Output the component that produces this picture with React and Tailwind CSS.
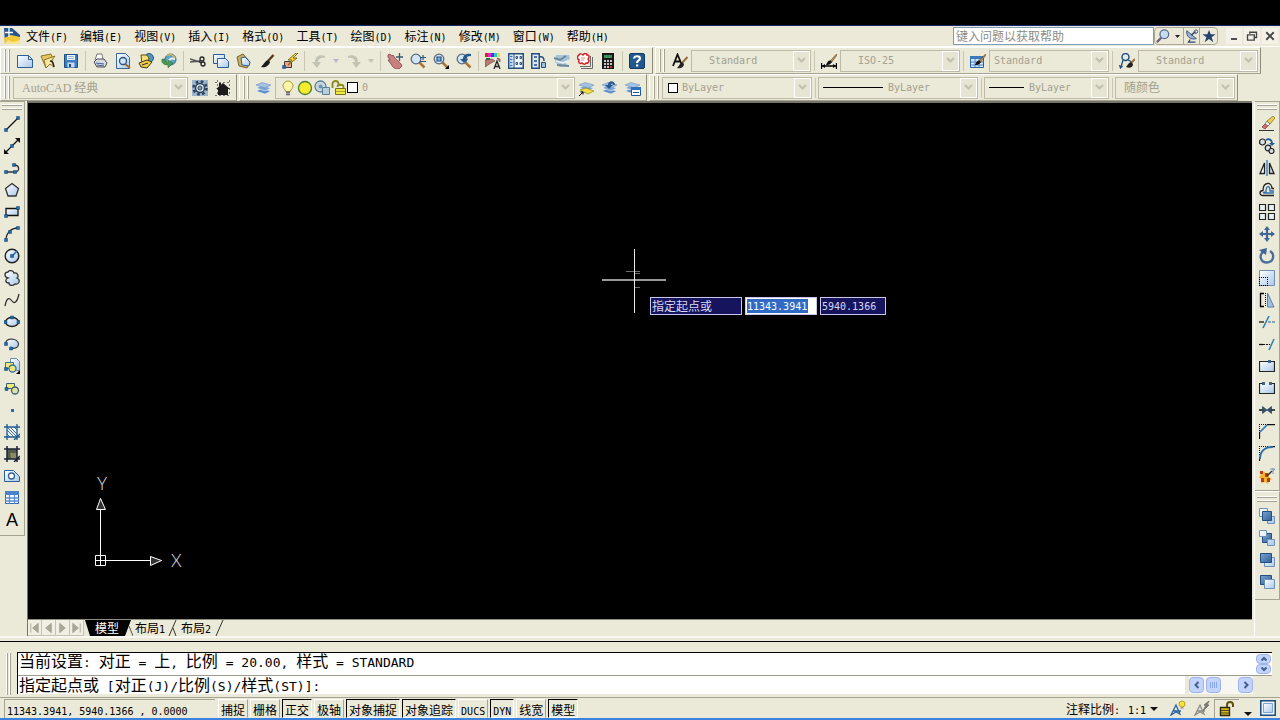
const MONO = "font-['DejaVu_Sans_Mono','Liberation_Mono',monospace]";
const HAN = "font-['Noto_Sans_CJK_SC',sans-serif]";

// Splits mixed text so that Latin runs take a half-width face.
const Mixed = ({ text, large }) => (
  <span className={`whitespace-pre ${HAN} ${large ? "text-[16px]" : "text-[12px]"}`}>
    {text.split(/([\x20-\x7e]+)/).map((part, i) =>
      i % 2 ? (
        <span key={i} className={`${MONO} ${large ? "text-[13px]" : "text-[10px]"}`}>{part}</span>
      ) : (
        part
      )
    )}
  </span>
);

const Svg = ({ children, size = 16 }) => (
  <svg width={size} height={size} viewBox="0 0 16 16" fill="none" className="shrink-0" aria-hidden="true">
    {children}
  </svg>
);

const Dot = ({ x, y }) => <path d={`M${x - 1.5} ${y - 1.5}h3v3h-3z`} fill="#1f6fae" stroke="#0c3c6c" strokeWidth="0.5" />;

const Defs = () => (
  <svg width="0" height="0" className="absolute" aria-hidden="true">
    <defs>
      <linearGradient id="sheet" x1="0" y1="0" x2="1" y2="1">
        <stop offset="0" stopColor="#ffffff" />
        <stop offset="1" stopColor="#a9c8ea" />
      </linearGradient>
      <linearGradient id="steel" x1="0" y1="0" x2="1" y2="1">
        <stop offset="0" stopColor="#7ba3d0" />
        <stop offset="1" stopColor="#2f5f98" />
      </linearGradient>
    </defs>
  </svg>
);

const brush = (
  <>
    <path d="M15.5 1L9 8l1.5 1.5L16 2z" fill="#b98a4a" stroke="#5a3c18" strokeWidth="0.5" />
    <path d="M9.5 7.5c-2.5 0-3.5 2-4.5 4.5 3 .5 5.5-1 5.7-3.2z" fill="#111" />
  </>
);

const layers = (
  <>
    <path d="M0 11l6-2.5 9 2.5-6 3z" fill="#5c8cc4" stroke="#fff" strokeWidth="0.5" />
    <path d="M0 8l6-2.5 9 2.5-6 3z" fill="#79a4d4" stroke="#fff" strokeWidth="0.5" />
    <path d="M0 5l6-2.5 9 2.5-6 3z" fill="#a3c2e4" stroke="#6486b0" strokeWidth="0.5" />
  </>
);

const lens = (
  <>
    <path d="M9 9l5.5 5.5" stroke="#a8763c" strokeWidth="2.5" />
    <circle cx="6" cy="6" r="4.8" fill="#d3e6f7" stroke="#5c6b7c" strokeWidth="1.3" />
  </>
);

const icons = {
  newFile: <path d="M.5 2.5h11l4 4v8H.5zM11.5 2.5v4h4" fill="url(#sheet)" stroke="#2c5f96" />,
  open: (
    <>
      <path d="M1 3l10-2 2 5-7 9z" fill="#e9c65d" stroke="#8c7428" />
      <path d="M4 7l11-4-3 4 2 7-4-3-4 4z" fill="#f7e7a0" stroke="#8c7428" />
      <path d="M10 8c3 0 3 2 4 6" stroke="#222" strokeWidth="1.5" />
    </>
  ),
  save: (
    <>
      <path d="M1.5 1.5h13v13h-13z" fill="#3f7cc0" stroke="#1d4c86" />
      <path d="M4 2h8v5H4z" fill="#eef5fc" />
      <path d="M5 3.5h6M5 5.5h6" stroke="#8fb3da" />
      <path d="M4.5 9.5h7v5h-7z" fill="#c4daf2" />
      <path d="M6 11h2v3H6z" fill="#1d4c86" />
    </>
  ),
  print: (
    <>
      <path d="M3 7L5 1h5l1 6" fill="#fff" stroke="#777" />
      <path d="M2 9l3-3h7l3 4-2 4H5z" fill="#d7d9e0" stroke="#4a4a55" />
      <path d="M4 10l8 1M5 12l7 1" stroke="#3d5d9c" />
    </>
  ),
  preview: (
    <>
      <path d="M1.5.5h9l4 4v11h-13z" fill="url(#sheet)" stroke="#3c6797" />
      <path d="M9 10l6 5" stroke="#a36a2a" strokeWidth="2" />
      <circle cx="8" cy="8" r="3.5" fill="#cfe4f7" stroke="#26527f" strokeWidth="1.3" />
    </>
  ),
  publish: (
    <>
      <circle cx="11" cy="5" r="4.5" fill="#4e97c4" stroke="#225b83" />
      <path d="M3 2h6l2 3-1 5-6 1z" fill="#f5df72" stroke="#5c4e18" />
      <path d="M1 10l8-3 5 2-5 6-6-1z" fill="#eccb4c" stroke="#40371a" />
      <path d="M4 12l6-2" stroke="#333" />
    </>
  ),
  globe: (
    <>
      <circle cx="9.5" cy="6.5" r="5.5" fill="#5ca5c9" stroke="#316484" />
      <path d="M6 3c3-3 6-1 8 2" stroke="#d6b35c" strokeWidth="1.5" />
      <path d="M7 9c2-4 4-4 7-3" stroke="#e6f1f6" strokeWidth="2" />
      <path d="M1 6c-1 4 2 6 6 6v3l5-5-5-3v2C5 9 3 8 4 6z" fill="#4a9b57" stroke="#246b32" strokeWidth="0.5" />
    </>
  ),
  cut: (
    <>
      <path d="M0 6l10 3M0 9l10-1" stroke="#555" strokeWidth="1.5" />
      <circle cx="12" cy="6" r="2" stroke="#222" strokeWidth="1.3" />
      <circle cx="13" cy="11" r="2" stroke="#222" strokeWidth="1.3" />
      <path d="M9 8l2 2" stroke="#222" strokeWidth="1.3" />
    </>
  ),
  copy: (
    <>
      <path d="M.5 1.5h11v9H.5z" fill="url(#sheet)" stroke="#2c5f96" />
      <path d="M4.5 5.5h8l3 3v6h-11z" fill="url(#sheet)" stroke="#2c5f96" />
    </>
  ),
  paste: (
    <>
      <path d="M1 4l6-3 7 8-3 6-8-2z" fill="#c7b060" stroke="#73622c" />
      <path d="M5 5l4-1 5 5-1 4-7-1z" fill="url(#sheet)" stroke="#2c5f96" />
    </>
  ),
  match: (
    <>
      <path d="M14.5 2L9 8" stroke="#5b3b1d" strokeWidth="2.5" />
      <path d="M9 7c-3 1-4 4-7 7 4 1 8-1 9-5z" fill="#1b1b1b" />
    </>
  ),
  blockEdit: (
    <>
      <path d="M2.5 8.5h7v6h-7z" fill="#e9a18c" stroke="#403a3a" />
      <Dot x={2} y={14} />
      <path d="M14 0L6 7h4l-4 5 9-7h-4l5-5z" fill="#f7d335" stroke="#6b560d" strokeWidth="0.8" />
    </>
  ),
  undo: <path d="M14 3C8 1 4 4 4 9H1l5 6 4-6H7c0-3 3-5 7-4z" fill="#c3c3b4" />,
  redo: <path d="M2 3c6-2 10 1 10 6h3l-5 6-4-6h3c0-3-3-5-7-4z" fill="#c3c3b4" />,
  pan: (
    <>
      <path d="M1 2l2-1 2 2 1-1 2 3 2 2c2 2 4 3 5 6l-3 3c-4 0-6-1-8-5L1 7l2 0-2-3z" fill="#c97f80" stroke="#814248" strokeWidth="0.8" />
      <path d="M12.5 0v8M9 4h7" stroke="#3b5470" strokeWidth="1.3" />
    </>
  ),
  zoomRt: (
    <>
      {lens}
      <path d="M10 4.5h6M13 2v5M10 8.5h6" stroke="#2c5577" strokeWidth="1.2" />
    </>
  ),
  zoomWin: (
    <>
      {lens}
      <path d="M4 4h4v4H4z" fill="#7eaedb" stroke="#214c7a" strokeWidth="1.2" />
      <path d="M16 12v4h-4z" fill="#000" />
    </>
  ),
  zoomPrev: (
    <>
      {lens}
      <path d="M15 1C9 0 7 3 7 6H4l4 4 4-4h-2c0-2 2-3 5-3z" fill="#23598f" />
    </>
  ),
  props: (
    <>
      <path d="M0 0h3v4H0z" fill="#d22" />
      <path d="M3 0h3v4H3z" fill="#dc2cc8" />
      <path d="M6 0h3v4H6z" fill="#3a3ae0" />
      <path d="M9 0h3v4H9z" fill="#2cc4cf" />
      <path d="M12 0h3v4h-3z" fill="#e8e02c" />
      <path d="M0 7l7-1 3 2-4 2-6 4zM12 5l3 1v3z" fill="#b87c74" stroke="#6b3b36" strokeWidth="0.6" />
      <path d="M1 5h4v2H1z" fill="#2b6f35" />
      <path d="M9 16l3-8 3 8M10.3 13.5h3.5" stroke="#222" strokeWidth="1.3" />
    </>
  ),
  designCenter: (
    <>
      <path d="M.75.75h14.5v14.5H.75z" fill="#eef4fb" stroke="#244e7d" strokeWidth="1.5" />
      <path d="M6 1v14" stroke="#244e7d" />
      <path d="M2 3.5h2.5M2 6.5h2.5M2 9.5h2.5M2 12.5h2.5" stroke="#3c77b5" strokeWidth="1.5" />
      <path d="M8 3.5h1.5v2H8zM12 3.5h1.5v2H12zM8 9.5h1.5v2H8zM12 9.5h1.5v2H12z" fill="#fff" stroke="#244e7d" />
    </>
  ),
  palettes: (
    <>
      <path d="M.75.75h7.5v14.5H.75z" fill="#d9e7f6" stroke="#244e7d" strokeWidth="1.5" />
      <path d="M3 4h3M3 8h3M3 12h3" stroke="#244e7d" strokeWidth="1.5" />
      <path d="M8 4c4-1 5 1 5 4" stroke="#244e7d" strokeWidth="1.5" />
      <path d="M10.5 9.5h4v5h-4z" fill="#9fc1e5" stroke="#244e7d" />
    </>
  ),
  sheetSet: (
    <>
      <path d="M2 2h13l1 4-6 3 5 4-9 1-5-5z" fill="#a6c3d9" />
      <path d="M0 5l6 2 6-4M3 12l12 1" stroke="#6c8796" strokeWidth="2" />
      <path d="M2 8l7 2 5-2" stroke="#e9f1f7" strokeWidth="1.5" />
    </>
  ),
  markup: (
    <>
      <path d="M4 15.5h11.5V4M3 13.5h10.5V3" stroke="#6a6a6a" />
      <path d="M2 2c1-2 3-1 4 0 1-2 4-2 4 0 3 0 2 3 1 4 2 2 0 5-2 4-1 2-3 1-4 0-2 1-4 0-3-3-2-1-2-4 0-5z" fill="#fff" stroke="#d4202a" strokeWidth="1.5" />
      <path d="M4 5h4M4 7h3" stroke="#e88" />
    </>
  ),
  calc: (
    <>
      <path d="M2 0h12v16H2z" fill="#181818" />
      <path d="M4 2h8v3H4z" fill="#3f8f55" />
      <path d="M4 8h8M4 11h8M4 14h8" stroke="#fff" strokeWidth="1.5" strokeDasharray="2 1" />
      <path d="M10 13h2v2h-2z" fill="#d22" />
    </>
  ),
  help: (
    <>
      <rect x="0.5" y="0.5" width="15" height="15" rx="1.5" fill="#22588c" stroke="#123a62" />
      <path d="M5 5.500c0-3 6-3 6 0 0 2-3 2-3 4.500" stroke="#fff" strokeWidth="2.2" />
      <path d="M7 11.500h2.200v2H7z" fill="#fff" />
    </>
  ),
  textStyle: (
    <>
      <path d="M1 13L5.500 1.500 9.500 11M2.500 8.500h6" stroke="#111" strokeWidth="1.8" />
      <path d="M15.500 4L10 10" stroke="#a0703a" strokeWidth="2" />
      <path d="M10 9c-2 1-2 3-5 6 4 1 7-1 7-4z" fill="#222" />
    </>
  ),
  dimStyle: (
    <>
      {brush}
      <path d="M.5 10v6M15.5 10v6M1 13h14" stroke="#000" strokeWidth="1.3" />
      <path d="M1 13l3-2v4zM15 13l-3-2v4z" fill="#000" />
    </>
  ),
  tableStyle: (
    <>
      <path d="M.5 3.5h13v11H.5z" fill="#d8e7f8" stroke="#2c62a2" />
      <path d="M0 3h14v3H0z" fill="#3a78c0" />
      <path d="M1 9h12M1 12h12M5 6v8M9 6v8" stroke="#4b83c3" />
      {brush}
    </>
  ),
  leaderStyle: (
    <>
      <circle cx="6.5" cy="4" r="3.5" stroke="#205486" strokeWidth="1.5" />
      <path d="M9 7l4 2M4 7l-2 7M.5 12l1 3 2-2" stroke="#205486" strokeWidth="1.3" />
      <path d="M16 6l-4 4" stroke="#a0703a" strokeWidth="2" />
      <path d="M12 9c-3 1-3 3-5 5 4 2 7 0 7-3z" fill="#222" />
    </>
  ),
  gear: (
    <>
      <path d="M0 0h16v16H0z" fill="#9db6cf" />
      <circle cx="8" cy="8" r="6.5" stroke="#2d4257" strokeWidth="2.5" strokeDasharray="2.6 2.5" />
      <circle cx="8" cy="8" r="4.5" fill="#dfe8ef" stroke="#2d4257" strokeWidth="1.5" />
      <circle cx="8" cy="8" r="2" fill="#8aa3bc" stroke="#2d4257" />
    </>
  ),
  home: (
    <>
      <path d="M0 2.5h16M0 15.5h16M2.5 0v16M14.5 0v16" stroke="#777" strokeDasharray="2 2" />
      <path d="M8 3l7 6h-2v6H3V9H1z" fill="#1c1c1c" />
      <path d="M4 3h2v3H4z" fill="#1c1c1c" />
    </>
  ),
  layers,
  bulb: (
    <>
      <path d="M8 1a5 5 0 0 1 5 5c0 2-2 3-2.5 5.500h-5C5 9 3 8 3 6a5 5 0 0 1 5-5z" fill="#fdf6a8" stroke="#a99a37" />
      <path d="M6 12.500h4M6 14.500h4" stroke="#667" strokeWidth="1.3" />
    </>
  ),
  sun: <circle cx="8" cy="8" r="6.5" fill="#f4ec2f" stroke="#4c7a35" strokeWidth="1.3" />,
  freeze: (
    <>
      <circle cx="6.5" cy="6.5" r="5.5" fill="#c9d8dc" stroke="#5f7e98" strokeWidth="1.3" />
      <circle cx="6.5" cy="6.5" r="2" fill="#6b93b8" />
      <path d="M8.5 7.5h7v7h-7z" fill="#b5cfdf" stroke="#5f7e98" />
    </>
  ),
  lock: (
    <>
      <path d="M1.500 8V4c0-4 6-4 6 0v2" stroke="#8d8a1d" strokeWidth="1.8" />
      <path d="M6.500 7c0-3 6-3 6 0v2" stroke="#8d8a1d" strokeWidth="1.8" />
      <path d="M4.500 8.500h10v6h-10z" fill="#f2e945" stroke="#77741a" />
      <path d="M5 11.500h9" stroke="#aaa42a" />
    </>
  ),
  layerCurrent: (
    <>
      {layers}
      <path d="M1 10l6-2 8 3-6 3z" fill="#f4e042" stroke="#8d7f1c" strokeWidth="0.6" />
      <path d="M0 16l4-4M1.500 12H4v2.500" stroke="#000" />
    </>
  ),
  layerPrev: (
    <>
      {layers}
      <path d="M13 5c0-5-7-5-7 0H3l4 4 4-4H9c0-2 2-2 2 0z" fill="#2d5a8e" />
    </>
  ),
  layerStates: (
    <>
      {layers}
      <path d="M6.5 7.5h9v8h-9z" fill="#fff" stroke="#21579a" />
      <path d="M6 7h10v3H6z" fill="#2f6fbd" />
      <path d="M8 12.500h6" stroke="#21579a" />
    </>
  ),

  line: (
    <>
      <path d="M2 14L14 2" stroke="#111" strokeWidth="1.3" />
      <Dot x={2} y={14} />
      <Dot x={14} y={2} />
    </>
  ),
  xline: (
    <>
      <path d="M2 14L14 2" stroke="#111" strokeWidth="1.3" />
      <path d="M16 0v5l-5-5zM0 16v-5l5 5z" fill="#111" />
      <Dot x={8} y={8} />
    </>
  ),
  pline: (
    <>
      <path d="M2 12h9c5 0 5-7-1-7" stroke="#333" strokeWidth="1.3" />
      <Dot x={2} y={12} />
      <Dot x={11} y={12} />
      <Dot x={10} y={5} />
    </>
  ),
  polygon: <path d="M8 1.500l6.500 5-2.500 7.500H4L1.500 6.500z" fill="url(#sheet)" stroke="#333" strokeWidth="1.3" />,
  rect: (
    <>
      <path d="M2 4.500h12v7H2z" fill="url(#sheet)" stroke="#111" strokeWidth="1.3" />
      <Dot x={2} y={12} />
      <Dot x={14} y={4} />
    </>
  ),
  arc: (
    <>
      <path d="M2 14C2 7 7 2 14 2" stroke="#222" strokeWidth="1.3" />
      <Dot x={2} y={14} />
      <Dot x={6} y={6} />
      <Dot x={14} y={2} />
    </>
  ),
  circle: (
    <>
      <circle cx="8" cy="8" r="6.8" fill="url(#sheet)" stroke="#222" strokeWidth="1.4" />
      <path d="M8 8l5-5" stroke="#1f6fae" strokeWidth="1.5" />
      <Dot x={8} y={8} />
    </>
  ),
  cloud: <path d="M4 8C0 7 0 2 4 2c1-2 5-2 6 1 4-1 5 4 3 5 4 2 2 7-2 6-2 2-6 2-6-1-4 0-4-4-1-5z" fill="url(#sheet)" stroke="#333" strokeWidth="1.3" />,
  spline: <path d="M1 14C3 4 6 6 8 9s5 2 7-7" stroke="#333" strokeWidth="1.3" />,
  ellipse: (
    <>
      <ellipse cx="8" cy="8" rx="6.5" ry="4.5" fill="url(#sheet)" stroke="#222" strokeWidth="1.4" />
      <Dot x={1.5} y={8} />
      <Dot x={14.5} y={8} />
      <Dot x={8} y={3.5} />
    </>
  ),
  ellipseArc: (
    <>
      <path d="M1.500 8C2 1 14 2 14.500 8c0 3-3 4.500-6.500 4.500" fill="url(#sheet)" stroke="#444" strokeWidth="1.3" />
      <Dot x={2} y={8} />
      <Dot x={7} y={12.5} />
    </>
  ),
  insertBlock: (
    <>
      <path d="M6.5.5h6l3 3v9h-9z" fill="url(#sheet)" stroke="#6a8db5" />
      <path d="M1.5 4.5h8v6h-8z" fill="#f0ea7c" stroke="#3c6d9a" />
      <circle cx="8.5" cy="10.5" r="3.5" fill="#e9e684" stroke="#3c6d9a" strokeWidth="1.3" />
      <Dot x={2} y={11} />
      <path d="M16 12v4h-4z" fill="#000" />
    </>
  ),
  makeBlock: (
    <>
      <path d="M2.5 3.5h8v5h-8z" fill="#f3ec6a" stroke="#3c5d7a" />
      <circle cx="11" cy="10.5" r="3.5" fill="#dfdf9e" stroke="#3c5d7a" strokeWidth="1.3" />
      <Dot x={2.5} y={9} />
    </>
  ),
  point: <path d="M7 7h3v3H7z" fill="#1f6fae" />,
  hatch: (
    <>
      <path d="M3 3h10v10H3z" fill="#eef4fb" />
      <path d="M3 10l3 3M3 6l7 7M3 3l10 10M6 3l7 7M10 3l3 3" stroke="#245b90" strokeWidth="0.9" />
      <path d="M3 0v16M13 0v16M0 3h16M0 13h16M10 16l6-6" stroke="#245b90" strokeWidth="1.3" />
    </>
  ),
  gradient: (
    <>
      <path d="M3 3h10v10H3z" fill="#555a4c" />
      <path d="M6 7h7v6H7z" fill="#8b8b62" />
      <path d="M3 0v16M13 0v16M0 3h16M0 13h16M10 16l6-6" stroke="#1c2438" strokeWidth="1.5" />
    </>
  ),
  region: (
    <>
      <path d="M.5 2.500h9l6 6v5H.5z" fill="url(#sheet)" stroke="#2c5f96" />
      <circle cx="7.5" cy="8" r="3" fill="#fff" stroke="#37638f" strokeWidth="1.3" />
    </>
  ),
  table: (
    <>
      <path d="M1.5 1.5h13v12h-13z" fill="#fff" stroke="#2f66ad" />
      <path d="M1 1h14v4H1z" fill="#4d83c9" />
      <path d="M1 8h14M1 11h14M5.500 5v9M10.500 5v9" stroke="#5b8dce" strokeWidth="1.3" />
    </>
  ),

  erase: (
    <>
      <path d="M0 14.500h15" stroke="#333" />
      <path d="M3 11l3 2 3-3-3-2z" fill="#d86b60" stroke="#7c3840" strokeWidth="0.7" />
      <path d="M6 8l3 2 2-2-3-3z" fill="#e6edf4" stroke="#555" strokeWidth="0.7" />
      <path d="M8 5l3 3 5-6-2-2z" fill="#eccf52" stroke="#7c6a1d" strokeWidth="0.7" />
    </>
  ),
  copyObj: (
    <>
      <circle cx="3.5" cy="4" r="3" fill="#d6dde4" stroke="#222" strokeWidth="1.2" />
      <circle cx="9" cy="10" r="2.8" fill="#d6dde4" stroke="#222" strokeWidth="1.2" />
      <circle cx="12.5" cy="13" r="2.5" fill="#d6dde4" stroke="#222" strokeWidth="1.2" />
      <path d="M7 2c3-2 6 0 6 3" stroke="#1c5b99" strokeWidth="1.8" />
      <path d="M10 5h6l-3 3z" fill="#1c5b99" />
    </>
  ),
  mirror: (
    <>
      <path d="M5.500 3v10.500H1z" fill="#fff" stroke="#222" strokeWidth="1.3" />
      <path d="M10.500 3v10.500H15z" fill="#cbd9e8" stroke="#222" strokeWidth="1.3" />
      <path d="M8 0v16" stroke="#2e79bd" strokeWidth="1.3" />
    </>
  ),
  offset: (
    <>
      <path d="M15 13.500H4c-4 0-4-5 0-5 0-9 9-9 9-2h2" stroke="#222" strokeWidth="1.3" />
      <path d="M15 11H5c-1 0-1-1 2-1 0-7 4-7 4-1h4" stroke="#2e6fae" strokeWidth="1.3" />
    </>
  ),
  array: <path d="M.5.5h6v6h-6zM9.5.5h6v6h-6zM.5 9.500h6v6h-6zM9.500 9.500h6v6h-6z" fill="#e8f0f8" stroke="#222" strokeWidth="1.2" />,
  move: (
    <>
      <path d="M8 2v12M2 8h12" stroke="#3f6696" strokeWidth="2.2" />
      <path d="M8 0l3 4H5zM8 16l3-4H5zM0 8l4-3v6zM16 8l-4-3v6z" fill="#3f6696" />
    </>
  ),
  rotate: (
    <>
      <path d="M11 3c5 3 4 11-3 11.500C1 14.500 0 7 4 4" stroke="#4a6e98" strokeWidth="2.3" />
      <path d="M0 2l8-2-1 7z" fill="#3f6696" />
    </>
  ),
  scale: (
    <>
      <path d="M.5.5h15v15H.5z" fill="url(#sheet)" stroke="#7590ad" />
      <path d="M0 7.5h9M0 15.5h9M.5 7v9M8.5 7v9" stroke="#000" strokeDasharray="1 1" />
    </>
  ),
  stretch: (
    <>
      <path d="M8.500 1l6.500 14H8.500z" fill="#9fc1e2" stroke="#5d7fa6" />
      <path d="M5 1.500H1.500v13H5" stroke="#000" strokeWidth="1.3" />
      <path d="M6.500 1v14" stroke="#000" strokeDasharray="1 1" />
    </>
  ),
  trim: (
    <>
      <path d="M0 8h5" stroke="#111" strokeWidth="1.3" />
      <path d="M4 14L10 2" stroke="#2e79bd" strokeWidth="1.5" />
      <path d="M9 8h7" stroke="#2b5f94" strokeDasharray="3 1" />
    </>
  ),
  extend: (
    <>
      <path d="M0 8.500h4" stroke="#111" strokeWidth="1.3" />
      <path d="M4 8.500h7" stroke="#111" strokeDasharray="2 1" />
      <path d="M10 14l5-11" stroke="#2e79bd" strokeWidth="1.5" />
    </>
  ),
  breakPoint: (
    <>
      <path d="M.5 3.500h15v10H.5z" fill="url(#sheet)" stroke="#222" strokeWidth="1.2" />
      <path d="M9 2h3v3H9z" fill="#3c6388" />
    </>
  ),
  breakObj: (
    <>
      <path d="M1 4h14v9H1z" fill="url(#sheet)" />
      <path d="M3 3.500H.5v10h15v-10H13" stroke="#222" strokeWidth="1.2" />
      <path d="M3 2h3v3H3zM10 2h3v3h-3z" fill="#3c6388" />
    </>
  ),
  join: (
    <>
      <path d="M0 8h4M12 8h4" stroke="#111" strokeWidth="1.5" />
      <path d="M3.500 4.500L8 8l-4.500 3.500zM12.500 4.500L8 8l4.500 3.500z" fill="#35536f" stroke="#1d3349" strokeWidth="0.6" />
    </>
  ),
  chamfer: (
    <>
      <path d="M8 .5h8M.5 15V8" stroke="#111" strokeWidth="1.3" />
      <path d="M0 .5h8M.5 0v8" stroke="#111" strokeDasharray="1 1" />
      <path d="M1 8l7-7" stroke="#2e79bd" strokeWidth="1.7" />
    </>
  ),
  fillet: (
    <>
      <path d="M11 .5h5M.5 15v-4" stroke="#111" strokeWidth="1.3" />
      <path d="M0 .5h9M.5 0v9" stroke="#111" strokeDasharray="1 1" />
      <path d="M1 13C1 6 5 1 14 1" stroke="#2e6fae" strokeWidth="2" />
    </>
  ),
  explode: (
    <>
      <path d="M0 4l3 1 2-2 2 3 3-1v4l3 2-3 2-1 3-3-2-4 1 0-4-2-2 2-2z" fill="#f1b531" />
      <path d="M1 3h3v3H1zM6 5h3v4H6zM2 10h3v4H2zM8 10h3v4H8z" fill="#b93a20" />
      <path d="M8 8l5-5" stroke="#333" strokeWidth="1.5" />
      <path d="M11 1h5M14 0v6M12 5l4-4" stroke="#7d97b4" />
    </>
  ),
  orderFront: (
    <>
      <path d="M.5.5h8v8h-8zM8.5 8.5h7v7h-7z" fill="url(#sheet)" stroke="#6f92b8" />
      <path d="M3.5 3.5h9v9h-9z" fill="url(#steel)" stroke="#234f80" />
    </>
  ),
  orderBack: (
    <>
      <path d="M3.5 3.5h9v9h-9z" fill="url(#steel)" stroke="#234f80" />
      <path d="M.5.5h7v6h-7zM8.5 9.5h7v6h-7z" fill="url(#sheet)" stroke="#6f92b8" />
    </>
  ),
  orderAbove: (
    <>
      <path d="M5.5 5.5h10v9h-10z" fill="url(#sheet)" stroke="#6f92b8" />
      <path d="M1.5 1.5h11v9h-11z" fill="url(#steel)" stroke="#234f80" />
    </>
  ),
  orderUnder: (
    <>
      <path d="M1.5 1.5h11v9h-11z" fill="url(#steel)" stroke="#234f80" />
      <path d="M5.5 5.5h10v9h-10z" fill="url(#sheet)" stroke="#6f92b8" />
    </>
  ),
};

const ToolButton = ({ name }) => (
  <button type="button" aria-label={name} className="flex h-[22px] w-[23px] shrink-0 items-center justify-center">
    <Svg>{icons[name]}</Svg>
  </button>
);

const ToolButtons = ({ names }) => names.map((name) => <ToolButton key={name} name={name} />);

const Sep = () => (
  <div className="flex h-5 w-[6px] shrink-0 justify-center">
    <div className="w-px bg-[#c9c7b4]" />
  </div>
);

const Grip = () => (
  <div className="mx-[3px] flex h-[23px] w-[6px] shrink-0 justify-between">
    <div className="w-[2px] border-r border-[#a5a391] bg-white" />
    <div className="w-[2px] border-r border-[#a5a391] bg-white" />
  </div>
);

const GripFlat = () => (
  <div className="mt-[2px] mb-[3px] flex h-[6px] w-5 flex-col justify-between self-center">
    <div className="h-[2px] border-b border-[#a5a391] bg-white" />
    <div className="h-[2px] border-b border-[#a5a391] bg-white" />
  </div>
);

const Toolbar = ({ children }) => (
  <div className="flex h-[27px] shrink-0 items-center border-t border-r border-b border-l border-t-white border-r-[#8f8d7c] border-b-[#a5a391] border-l-white">
    {children}
  </div>
);

const DropMark = ({ color = "#c3c3b4" }) => (
  <svg width="6" height="4" viewBox="0 0 6 4" aria-hidden="true">
    <path d="M0 0h6L3 4z" fill={color} />
  </svg>
);

const Combo = ({ label, value, width, indent = "pl-1", han, children }) => (
  <div className={`flex h-[22px] shrink-0 items-center border border-[#bdbba8] ${width} ${indent}`}>
    {children}
    <select
      disabled
      aria-label={label}
      className={`h-full min-w-0 flex-1 appearance-none bg-transparent text-[#a3a190] opacity-100 ${
        han ? "font-['Liberation_Serif','Noto_Sans_CJK_SC',serif] text-[12px]" : `${MONO} text-[10px]`
      }`}
    >
      <option>{value}</option>
    </select>
    <div className="flex h-5 w-[17px] items-center justify-center border border-white bg-[#e6e4d3]">
      <svg width="9" height="7" viewBox="0 0 9 7" fill="none" aria-hidden="true">
        <path d="M1 1l3.5 3.5L8 1" stroke="#c2c0ae" strokeWidth="2.2" />
      </svg>
    </div>
  </div>
);

const menus = ["文件(F)", "编辑(E)", "视图(V)", "插入(I)", "格式(O)", "工具(T)", "绘图(D)", "标注(N)", "修改(M)", "窗口(W)", "帮助(H)"];

const MenuBar = () => (
  <div className="flex h-5 items-center bg-[#ece9d8]">
    <div className="flex w-5 justify-end">
      <Svg>
        <path d="M0 0h8l8 7v9H1z" fill="#23568c" />
        <path d="M0 10l7-3 9 2v7H1z" fill="#f3c93a" />
        <path d="M4 12l5 2 7-2v4H1z" fill="#fbe48a" />
        <path d="M5 0v9M1 4.500h8" stroke="#fff" strokeWidth="1.3" />
      </Svg>
    </div>
    <nav className="flex">
      {menus.map((menu) => (
        <button key={menu} type="button" className="flex h-5 items-center px-[6px]">
          <Mixed text={menu} />
        </button>
      ))}
    </nav>
    <input
      type="text"
      aria-label="帮助"
      placeholder="键入问题以获取帮助"
      className={`ml-auto h-[18px] w-[201px] border border-[#7f9db9] bg-white px-[2px] text-[12px] placeholder:text-[#8d8d86] ${HAN}`}
    />
    <div className="flex h-[18px] items-center rounded-sm border border-[#aaa894]">
      <button type="button" aria-label="搜索" className="flex w-4 justify-center">
        <Svg size={14}>
          <path d="M6 10l-5 5" stroke="#6c5d7d" strokeWidth="2.5" />
          <circle cx="9.5" cy="6" r="5" fill="#c6dcf0" stroke="#5b6b8d" strokeWidth="1.5" />
        </Svg>
      </button>
      <button type="button" aria-label="搜索范围" className="flex h-4 w-[13px] items-center justify-center border-r border-[#aaa894]">
        <svg width="5" height="3" viewBox="0 0 5 3" aria-hidden="true">
          <path d="M0 0h5L2.5 3z" fill="#222" />
        </svg>
      </button>
      <button type="button" aria-label="通讯中心" className="flex h-4 w-4 items-center justify-center border-r border-[#aaa894]">
        <Svg size={14}>
          <path d="M2 2c-1 6 4 11 11 9z" fill="#9db4cf" stroke="#2c4770" />
          <path d="M7 7l5-4M6 12l-2 3h8" stroke="#2c4770" strokeWidth="1.5" />
          <circle cx="12.5" cy="3" r="2" stroke="#2c4770" />
        </Svg>
      </button>
      <button type="button" aria-label="收藏夹" className="flex w-[17px] justify-center">
        <Svg size={14}>
          <path d="M8 1l2 5h5.500L11 9.500l2 5.500-5-3.500L3 15l2-5.500L.5 6H6z" fill="#24436e" />
        </Svg>
      </button>
    </div>
    <div className="ml-2 flex gap-[2px]">
      <button type="button" aria-label="最小化" className="flex h-4 w-4 items-center justify-center bg-[#f4f2e8]">
        <Svg size={12}><path d="M4 12h8" stroke="#444" strokeWidth="2.5" /></Svg>
      </button>
      <button type="button" aria-label="还原" className="flex h-4 w-4 items-center justify-center bg-[#f4f2e8]">
        <Svg size={12}><path d="M5 5V3h9v7h-3M2 6.500h9v7H2z" stroke="#444" strokeWidth="1.8" /></Svg>
      </button>
      <button type="button" aria-label="关闭" className="mr-[2px] flex h-4 w-4 items-center justify-center bg-[#f4f2e8]">
        <Svg size={12}><path d="M3 3l10 10M13 3L3 13" stroke="#444" strokeWidth="2.5" /></Svg>
      </button>
    </div>
  </div>
);

const TopToolbars = () => (
  <div className="flex flex-col border-t border-white">
    <div className="flex gap-[2px]">
      <Toolbar>
        <Grip />
        <ToolButtons names={["newFile", "open", "save"]} />
        <Sep />
        <ToolButtons names={["print", "preview", "publish", "globe"]} />
        <Sep />
        <ToolButtons names={["cut", "copy", "paste", "match", "blockEdit"]} />
        <Sep />
        <ToolButton name="undo" />
        <button type="button" aria-label="undo list" className="flex w-3 justify-center"><DropMark color="#b5b8cf" /></button>
        <ToolButton name="redo" />
        <button type="button" aria-label="redo list" className="flex w-3 justify-center"><DropMark /></button>
        <Sep />
        <ToolButtons names={["pan", "zoomRt", "zoomWin", "zoomPrev"]} />
        <Sep />
        <ToolButtons names={["props", "designCenter", "palettes", "sheetSet", "markup", "calc"]} />
        <Sep />
        <ToolButton name="help" />
        <div className="w-1" />
      </Toolbar>
      <Toolbar>
        <Grip />
        <ToolButton name="textStyle" />
        <Combo label="文字样式" value="Standard" width="w-[120px]" indent="pl-[17px]" />
        <Sep />
        <ToolButton name="dimStyle" />
        <Combo label="标注样式" value="ISO-25" width="w-[120px]" indent="pl-[17px]" />
        <Sep />
        <ToolButton name="tableStyle" />
        <Combo label="表格样式" value="Standard" width="w-[120px]" indent="pl-[4px]" />
        <Sep />
        <ToolButton name="leaderStyle" />
        <Combo label="多重引线样式" value="Standard" width="w-[120px]" indent="pl-[17px]" />
        <div className="w-[2px]" />
      </Toolbar>
    </div>
    <div className="flex gap-[2px]">
      <Toolbar>
        <Grip />
        <Combo label="工作空间" value="AutoCAD 经典" width="w-[175px]" indent="pl-[8px]" han />
        <ToolButtons names={["gear", "home"]} />
        <div className="w-[2px]" />
      </Toolbar>
      <Toolbar>
        <Grip />
        <ToolButton name="layers" />
        <Combo label="图层" value="0" width="w-[300px]" indent="pl-[3px]">
          {["bulb", "sun", "freeze", "lock"].map((name) => (
            <span key={name} className="flex w-[17px] justify-center"><Svg>{icons[name]}</Svg></span>
          ))}
          <span className="mr-1 h-[11px] w-[11px] border border-black bg-white" />
        </Combo>
        <ToolButtons names={["layerCurrent", "layerPrev", "layerStates"]} />
        <div className="w-[2px]" />
      </Toolbar>
      <Toolbar>
        <Grip />
        <Combo label="颜色" value="ByLayer" width="w-[150px]" indent="pl-[5px]">
          <span className="mr-1 h-[10px] w-[10px] border border-black bg-white" />
        </Combo>
        <Sep />
        <Combo label="线型" value="ByLayer" width="w-[160px]" indent="pl-[4px]">
          <span className="mr-[5px] h-px w-[60px] bg-black" />
        </Combo>
        <Sep />
        <Combo label="线宽" value="ByLayer" width="w-[125px]" indent="pl-[4px]">
          <span className="mr-[5px] h-px w-[35px] bg-black" />
        </Combo>
        <Sep />
        <Combo label="打印样式" value="随颜色" width="w-[120px]" indent="pl-[8px]" han />
        <div className="w-[2px]" />
      </Toolbar>
    </div>
  </div>
);

const drawTools = [
  "line", "xline", "pline", "polygon", "rect", "arc", "circle", "cloud", "spline",
  "ellipse", "ellipseArc", "insertBlock", "makeBlock", "point", "hatch", "gradient", "region", "table",
];

const modifyTools = [
  "erase", "copyObj", "mirror", "offset", "array", "move", "rotate", "scale", "stretch",
  "trim", "extend", "breakPoint", "breakObj", "join", "chamfer", "fillet", "explode",
];

const Canvas = () => (
  <main className="relative min-h-[400px] flex-1 overflow-hidden bg-black">
    <svg width="66" height="66" viewBox="0 0 66 66" className="absolute top-[146px] left-[573px]" aria-hidden="true">
      <path d="M25 22.500h14M33 24.500h6M33 38.500h6" stroke="#6d6d6d" />
      <path d="M1 31h64" stroke="#9a9a9a" strokeWidth="2" />
      <path d="M33.500 0v64" stroke="#e8e8e8" />
    </svg>
    <div className="absolute top-[194px] left-[622px] flex gap-[3px]">
      <label htmlFor="coord-x" className="flex h-[18px] w-[92px] items-center border border-[#c9c6ea] bg-[#15145c] px-px text-[#d9d8f4]">
        <Mixed text="指定起点或" />
      </label>
      <div className="flex h-[18px] w-[72px] items-center border border-[#c9c6ea] bg-white px-px">
        <input id="coord-x" type="text" defaultValue="11343.3941" className={`h-[14px] w-[61px] bg-[#316ac5] text-[10px] text-white ${MONO}`} />
      </div>
      <input type="text" aria-label="Y" defaultValue="5940.1366" className={`h-[18px] w-[66px] border border-[#c9c6ea] bg-[#15145c] px-px text-[10px] text-[#d9d8f4] ${MONO}`} />
    </div>
    <svg width="100" height="100" viewBox="0 0 100 100" className="absolute bottom-[49px] left-[62px]" aria-hidden="true">
      <path d="M5.500 85.500h10v10h-10zM10.500 95V39M6 90.500h55" stroke="#fff" fill="none" />
      <path d="M10.500 28.500l-4 11h9zM71.500 90.500l-11-4v9z" stroke="#fff" fill="#333" />
      <text x="7" y="20" fill="#e6e6e6" fontSize="17" fontFamily="Lato, Liberation Sans, sans-serif" fontWeight="300">Y</text>
      <text x="81" y="97" fill="#e6e6e6" fontSize="17" fontFamily="Lato, Liberation Sans, sans-serif" fontWeight="300">X</text>
    </svg>
  </main>
);

const tabArrows = ["M3 2v10M11 2v10L5 7z", "M10 2v10L4 7z", "M4 2v10l6-5z", "M11 2v10M3 2v10l6-5z"];

const LayoutTabs = () => (
  <div className="flex h-[17px] border-t border-[#8f8d7c]">
    {tabArrows.map((d) => (
      <button key={d} type="button" aria-label="滚动布局" className="flex w-[14px] items-center justify-center border-r border-b border-[#c5c3b0] bg-[#f1efe3]">
        <svg width="14" height="14" viewBox="0 0 14 14" aria-hidden="true">
          <path d={d} fill="#a9a796" stroke="#a9a796" />
        </svg>
      </button>
    ))}
    <svg width="8" height="16" viewBox="0 0 8 16" aria-hidden="true"><path d="M1 0h7v16H6z" fill="#000" /></svg>
    <button type="button" className="flex items-center bg-black px-[3px] text-white"><Mixed text="模型" /></button>
    <svg width="11" height="16" viewBox="0 0 11 16" aria-hidden="true">
      <path d="M0 0h9L3 16H0z" fill="#000" />
      <path d="M7 6l4 10" stroke="#555" />
    </svg>
    <button type="button" className="flex items-center px-[2px]"><Mixed text="布局1" /></button>
    <svg width="11" height="16" viewBox="0 0 11 16" fill="none" aria-hidden="true">
      <path d="M9 0L2 16M6 8l3 8" stroke="#333" />
    </svg>
    <button type="button" className="flex items-center px-[3px]"><Mixed text="布局2" /></button>
    <svg width="11" height="16" viewBox="0 0 11 16" fill="none" aria-hidden="true">
      <path d="M9 0L2 16" stroke="#333" />
    </svg>
  </div>
);

const ScrollButton = ({ label, d, size }) => (
  <button type="button" aria-label={label} className={`flex items-center justify-center rounded-sm border border-[#9db5ea] bg-[#c3d3fd] ${size}`}>
    <svg width="8" height="8" viewBox="0 0 8 8" fill="none" aria-hidden="true">
      <path d={d} stroke="#42608f" strokeWidth="2" />
    </svg>
  </button>
);

const CommandPanel = () => (
  <section className="flex h-[56px] border-t border-black pt-[10px] pr-2">
    <div className="mt-px mr-[6px] ml-[6px] flex h-[42px] w-[5px] justify-between">
      <div className="w-[2px] border-r border-[#a5a391] bg-white" />
      <div className="w-[2px] border-r border-[#a5a391] bg-white" />
    </div>
    <div className="flex h-[42px] min-w-0 flex-1 flex-col border-t border-l border-black">
      <div className="flex h-[23px] border-b border-[#9c9a8a] bg-white">
        <p className="flex flex-1 items-center pb-[6px] pl-px leading-4">
          <Mixed large text="当前设置: 对正 = 上, 比例 = 20.00, 样式 = STANDARD" />
        </p>
        <div className="flex w-4 flex-col justify-between py-px">
          <ScrollButton label="向上" d="M1.500 5.500L4 3l2.500 2.500" size="h-[10px] w-[15px]" />
          <ScrollButton label="向下" d="M1.500 2.500L4 5l2.500-2.500" size="h-[10px] w-[15px]" />
        </div>
      </div>
      <div className="mr-[19px] flex h-[18px] bg-white">
        <label htmlFor="command" className="flex items-center pl-px leading-4">
          <Mixed large text="指定起点或 [对正(J)/比例(S)/样式(ST)]:" />
        </label>
        <input id="command" type="text" className={`min-w-0 flex-1 text-[13px] outline-none ${MONO}`} />
        <div className="flex items-center border-l-4 border-[#ece9d8] bg-[#f7f6f1]">
          <ScrollButton label="向左" d="M5.500 1L2.500 4l3 3" size="h-4 w-[15px]" />
          <button type="button" aria-label="滚动" className="ml-[2px] flex h-4 w-[15px] items-center justify-center gap-px rounded-sm border border-[#9db5ea] bg-[#c3d3fd]">
            {[0, 1, 2, 3].map((i) => <span key={i} className="h-[6px] w-px bg-[#8ba8e8]" />)}
          </button>
          <div className="w-[17px]" />
          <ScrollButton label="向右" d="M2.500 1l3 3-3 3" size="h-4 w-[15px]" />
        </div>
      </div>
    </div>
  </section>
);

const modes = [
  ["捕捉", false], ["栅格", false], ["正交", true], ["极轴", false], ["对象捕捉", true],
  ["对象追踪", true], ["DUCS", false], ["DYN", true], ["线宽", false], ["模型", true],
];

const StatusBar = () => (
  <footer className="flex h-[23px] items-center border-t border-b-2 border-t-[#a5a391] border-b-[#3b82e0] pl-1">
    <div className="mr-[3px] flex h-[19px] w-[211px] items-center border-t border-l border-[#a5a391] pt-[2px] pl-[2px]">
      <Mixed text="11343.3941, 5940.1366 , 0.0000" />
    </div>
    <div className="flex gap-[2px]">
      {modes.map(([name, on]) => (
        <button
          key={name}
          type="button"
          aria-pressed={on}
          className={`flex h-[19px] items-center border px-[2px] pt-[3px] ${
            on ? "border-t-black border-r-white border-b-white border-l-black" : "border-t-white border-r-[#a5a391] border-b-transparent border-l-white"
          }`}
        >
          <Mixed text={name} />
        </button>
      ))}
    </div>
    <div className="ml-auto flex h-[19px] items-center">
      <button type="button" className="flex items-center pt-[2px]">
        <Mixed text="注释比例:" />
        <span className="mr-1 ml-2 flex"><Mixed text="1:1" /></span>
        <svg width="8" height="4" viewBox="0 0 8 4" aria-hidden="true"><path d="M0 0h8L4 4z" fill="#111" /></svg>
      </button>
      <button type="button" aria-label="注释可见性" className="ml-2 flex w-6 justify-center">
        <Svg>
          <path d="M1 15l5-10 4 9-4-2zM3 11h8" fill="#dbe8f5" stroke="#2d639b" strokeWidth="1.3" />
          <circle cx="12" cy="4" r="3" fill="#f8e23c" stroke="#b9a327" />
          <path d="M10.500 8h3" stroke="#777" />
        </Svg>
      </button>
      <button type="button" aria-label="自动缩放" className="flex w-6 justify-center">
        <Svg>
          <path d="M1 15l5-10 4 9-4-2zM3 11h8" fill="#ddd" stroke="#8f8f86" strokeWidth="1.3" />
          <path d="M15 1l-5 4 2 0-3 6 6-6h-2z" fill="#7d7d75" stroke="#77776e" />
        </Svg>
      </button>
      <button type="button" aria-label="锁定" className="flex h-[19px] w-[25px] items-center justify-center border-t border-l border-[#a5a391]">
        <Svg>
          <path d="M8 8V4c0-4 6-4 6 0v2" stroke="#5c5210" strokeWidth="2" />
          <path d="M1.500 6.500h9v8h-9z" fill="#d8b928" stroke="#2d290c" strokeWidth="1.4" />
          <path d="M2 9.500h8M2 12h8" stroke="#4b4413" />
        </Svg>
      </button>
      <button type="button" aria-label="状态栏菜单" className="flex h-4 w-[17px] items-end justify-center">
        <svg width="8" height="4" viewBox="0 0 8 4" aria-hidden="true"><path d="M0 0h8L4 4z" fill="#111" /></svg>
      </button>
      <button type="button" aria-label="全屏显示" className="mr-1 ml-1 flex justify-center">
        <Svg>
          <path d="M.75.75h14.5v14.5H.75z" fill="#e8f1fa" stroke="#1d4c80" strokeWidth="1.5" />
          <path d="M3.5 3.5h9v9h-9z" fill="url(#sheet)" stroke="#7ea6d0" />
        </Svg>
      </button>
    </div>
  </footer>
);

const App = () => {
  return (
    <div className="flex min-h-screen flex-col overflow-hidden bg-[#ebe9d7] text-black">
      <Defs />
      <div className="h-[26px] border-b border-[#16256e] bg-black" />
      <MenuBar />
      <TopToolbars />
      <div className="flex flex-1">
        <aside className="mr-[2px] w-[25px] border-t border-[#a5a391]">
          <div className="flex flex-col items-center border-r border-b border-[#a5a391] pb-1">
            <GripFlat />
            <ToolButtons names={drawTools} />
            <button type="button" className="flex h-[22px] w-[23px] items-center justify-center font-['Liberation_Sans',sans-serif] text-[18px] leading-none">
              A
            </button>
          </div>
        </aside>
        <div className="flex min-w-0 flex-1 flex-col border-t-2 border-l border-[#77756a]">
          <Canvas />
          <LayoutTabs />
        </div>
        <aside className="ml-[2px] w-[26px] border-t border-l border-t-[#a5a391] border-l-white">
          <div className="flex flex-col items-center border-r border-b border-[#a5a391] pb-[3px]">
            <GripFlat />
            <ToolButtons names={modifyTools} />
          </div>
          <div className="flex flex-col items-center border-t border-r border-b border-t-white border-r-[#a5a391] border-b-[#a5a391] pt-[2px] pb-[6px]">
            <GripFlat />
            <ToolButtons names={["orderFront", "orderBack", "orderAbove", "orderUnder"]} />
          </div>
        </aside>
      </div>
      <div className="mb-[3px] h-[2px] bg-[#f8f7f0]" />
      <CommandPanel />
      <StatusBar />
    </div>
  );
};

export default App;
